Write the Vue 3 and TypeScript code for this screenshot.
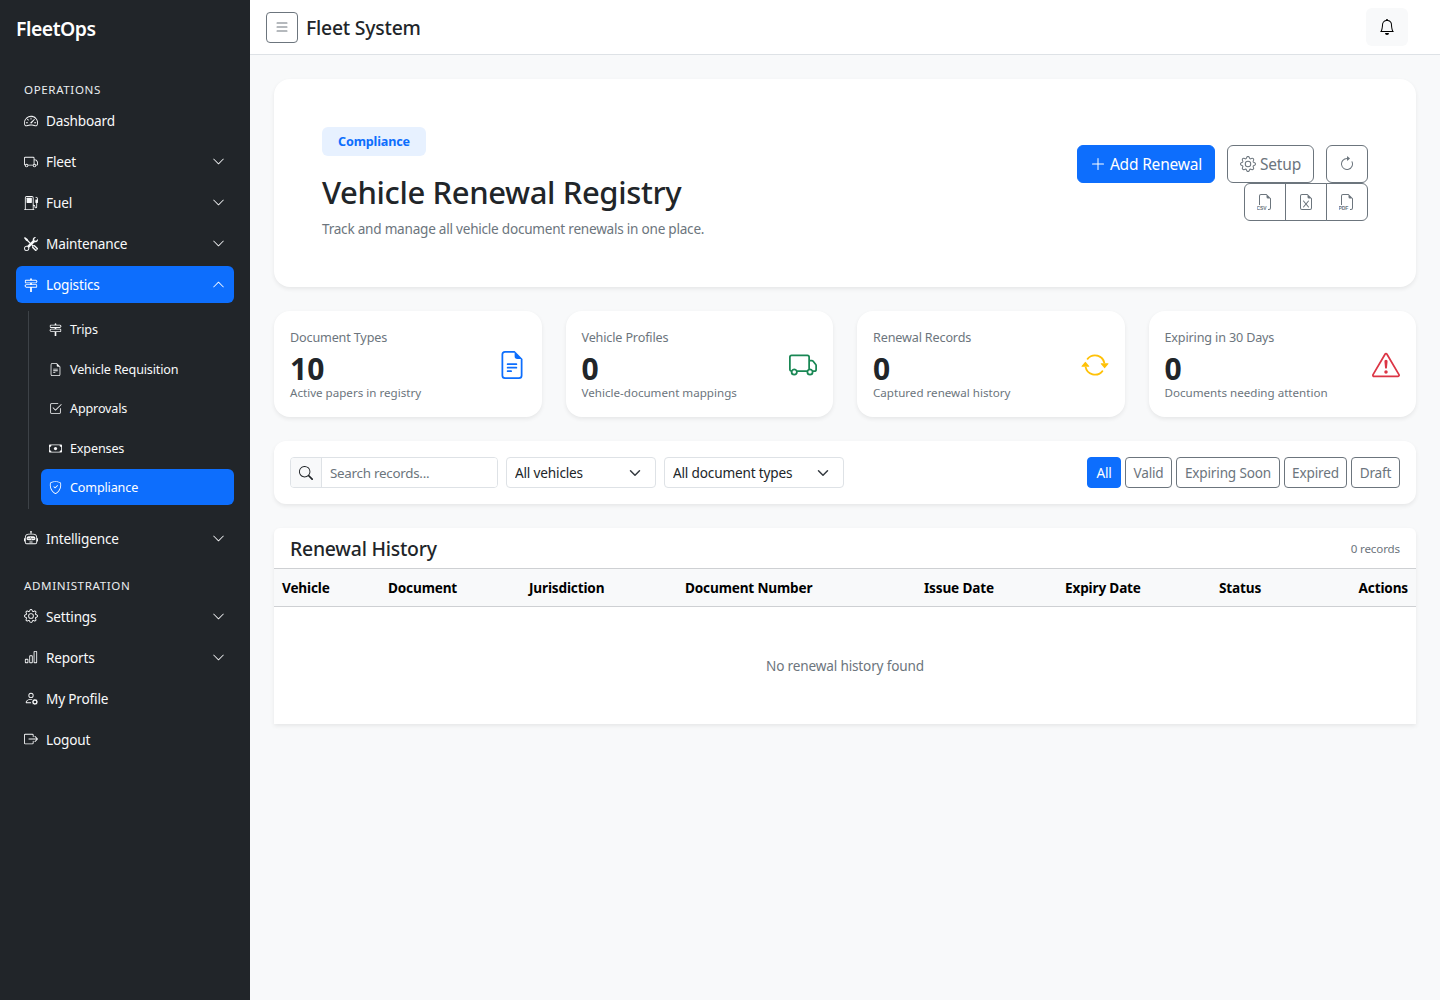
<template>
  <div class="layout">
    <aside class="sidebar">
      <div class="brand">FleetOps</div>
      <template v-for="section in navSections" :key="section.title">
        <div class="section-label">{{ section.title }}</div>
        <nav class="nav-list">
          <template v-for="item in section.items" :key="item.label">
            <a class="nav-item" :class="{ active: item.open }">
              <BiIcon :name="item.icon" :size="14" />
              <span class="nav-text">{{ item.label }}</span>
              <BiIcon v-if="item.children" :name="item.open ? 'chevronUp' : 'chevronDown'" :size="13" class="chevron" />
            </a>
            <div v-if="item.open" class="subnav">
              <a v-for="child in item.children" :key="child.label" class="sub-item" :class="{ active: child.active }">
                <BiIcon :name="child.icon" :size="13" />
                <span>{{ child.label }}</span>
              </a>
            </div>
          </template>
        </nav>
      </template>
    </aside>

    <div class="content">
      <header class="topbar">
        <button class="toggle"><BiIcon name="list" :size="16" /></button>
        <div class="system-name">Fleet System</div>
        <button class="bell"><BiIcon name="bell" :size="16" /></button>
      </header>

      <main class="page">
        <section class="hero">
          <div class="hero-text">
            <span class="badge">Compliance</span>
            <h1>Vehicle Renewal Registry</h1>
            <p>Track and manage all vehicle document renewals in one place.</p>
          </div>
          <div class="hero-actions">
            <button class="btn btn-primary"><BiIcon name="plusLg" :size="16" /> Add Renewal</button>
            <button class="btn btn-outline btn-setup"><BiIcon name="gear" :size="16" /> Setup</button>
            <button class="btn btn-outline btn-icon"><BiIcon name="refresh" :size="16" /></button>
            <div class="export-group">
              <button class="btn btn-outline btn-icon">
                <svg width="16" height="16" viewBox="0 0 16 16" fill="currentColor">
                  <path :d="filePath" />
                  <text x="-0.6" y="16" class="file-label">CSV</text>
                </svg>
              </button>
              <button class="btn btn-outline btn-icon"><BiIcon name="excel" :size="16" /></button>
              <button class="btn btn-outline btn-icon">
                <svg width="16" height="16" viewBox="0 0 16 16" fill="currentColor">
                  <path :d="filePath" />
                  <text x="-0.6" y="16" class="file-label">PDF</text>
                </svg>
              </button>
            </div>
          </div>
        </section>

        <section class="stats">
          <div v-for="stat in stats" :key="stat.label" class="stat-card">
            <div>
              <div class="stat-label">{{ stat.label }}</div>
              <div class="stat-value">{{ stat.value }}</div>
              <div class="stat-note">{{ stat.note }}</div>
            </div>
            <BiIcon :name="stat.icon" :size="28" class="stat-icon" :style="{ color: stat.color }" />
          </div>
        </section>

        <section class="filters">
          <div class="search-group">
            <span class="search-addon"><BiIcon name="search" :size="14" /></span>
            <input type="text" placeholder="Search records..." />
          </div>
          <div class="select-wrap vehicles">
            <select><option>All vehicles</option></select>
            <svg class="select-arrow" viewBox="0 0 16 16"><path d="m2 5 6 6 6-6" /></svg>
          </div>
          <div class="select-wrap types">
            <select><option>All document types</option></select>
            <svg class="select-arrow" viewBox="0 0 16 16"><path d="m2 5 6 6 6-6" /></svg>
          </div>
          <div class="status-buttons">
            <button
              v-for="s in statuses"
              :key="s.label"
              class="status-btn"
              :class="{ active: s.label === activeStatus }"
              :style="{ width: s.width + 'px' }"
              @click="activeStatus = s.label"
            >
              {{ s.label }}
            </button>
          </div>
        </section>

        <section class="history">
          <div class="history-head">
            <h2>Renewal History</h2>
            <span>0 records</span>
          </div>
          <table>
            <thead>
              <tr>
                <th v-for="col in columns" :key="col.label" :style="{ width: col.width + 'px' }" :class="{ right: col.label === 'Actions' }">{{ col.label }}</th>
              </tr>
            </thead>
            <tbody>
              <tr>
                <td :colspan="columns.length" class="empty">No renewal history found</td>
              </tr>
            </tbody>
          </table>
        </section>
      </main>
    </div>
  </div>
</template>

<script setup lang="ts">
import { h, ref } from 'vue'

const icons: Record<string, string[]> = {
  speedometer: [
    'M8 4a.5.5 0 0 1 .5.5V6a.5.5 0 0 1-1 0V4.5A.5.5 0 0 1 8 4M3.732 5.732a.5.5 0 0 1 .707 0l.915.914a.5.5 0 1 1-.708.708l-.914-.915a.5.5 0 0 1 0-.707M2 10a.5.5 0 0 1 .5-.5h1.586a.5.5 0 0 1 0 1H2.5A.5.5 0 0 1 2 10m9.5 0a.5.5 0 0 1 .5-.5h1.5a.5.5 0 0 1 0 1H12a.5.5 0 0 1-.5-.5m.754-4.246a.39.39 0 0 0-.527-.02L7.547 9.31a.91.91 0 1 0 1.302 1.258l3.434-4.297a.39.39 0 0 0-.029-.518z',
    'M0 10a8 8 0 1 1 15.547 2.661c-.442 1.253-1.845 1.602-2.932 1.25C11.309 13.488 9.475 13 8 13c-1.474 0-3.31.488-4.615.911-1.087.352-2.49.003-2.932-1.25A8 8 0 0 1 0 10m8-7a7 7 0 0 0-6.603 9.329c.203.575.923.876 1.68.63C4.397 12.533 6.358 12 8 12s3.604.532 4.923.96c.757.245 1.477-.056 1.68-.631A7 7 0 0 0 8 3'
  ],
  truck: [
    'M0 3.5A1.5 1.5 0 0 1 1.5 2h9A1.5 1.5 0 0 1 12 3.5V5h1.02a1.5 1.5 0 0 1 1.17.563l1.481 1.85a1.5 1.5 0 0 1 .329.938V10.5a1.5 1.5 0 0 1-1.5 1.5H14a2 2 0 1 1-4 0H5a2 2 0 1 1-3.998-.085A1.5 1.5 0 0 1 0 10.5zm1.294 7.456A2 2 0 0 1 4.732 11h5.536a2 2 0 0 1 .732-.732V3.5a.5.5 0 0 0-.5-.5h-9a.5.5 0 0 0-.5.5v7a.5.5 0 0 0 .294.456M12 10a2 2 0 0 1 1.732 1h.768a.5.5 0 0 0 .5-.5V8.35a.5.5 0 0 0-.11-.312l-1.48-1.85A.5.5 0 0 0 13.02 6H12zm-9 1a1 1 0 1 0 0 2 1 1 0 0 0 0-2m9 0a1 1 0 1 0 0 2 1 1 0 0 0 0-2'
  ],
  fuel: [
    'M3 2.5a.5.5 0 0 1 .5-.5h5a.5.5 0 0 1 .5.5v5a.5.5 0 0 1-.5.5h-5a.5.5 0 0 1-.5-.5z',
    'M1 2a2 2 0 0 1 2-2h6a2 2 0 0 1 2 2v8a2 2 0 0 1 2 2v.5a.5.5 0 0 0 1 0V8h-.5a.5.5 0 0 1-.5-.5V4.375a.5.5 0 0 1 .5-.5h1.495c-.011-.476-.053-.894-.201-1.222a.97.97 0 0 0-.394-.458c-.184-.11-.464-.195-.9-.195a.5.5 0 0 1 0-1q.846-.002 1.412.336c.383.228.634.551.794.907.295.655.294 1.465.294 2.081v3.175a.5.5 0 0 1-.5.501H15v4.5a1.5 1.5 0 0 1-3 0V12a1 1 0 0 0-1-1v4h.5a.5.5 0 0 1 0 1H.5a.5.5 0 0 1 0-1H1zm9 0a1 1 0 0 0-1-1H3a1 1 0 0 0-1 1v13h8z'
  ],
  tools: [
    'M1 0 0 1l2.2 3.081a1 1 0 0 0 .815.419h.07a1 1 0 0 1 .708.293l2.675 2.675-2.617 2.654A3.003 3.003 0 0 0 0 13a3 3 0 1 0 5.878-.851l2.654-2.617.968.968-.305.914a1 1 0 0 0 .242 1.023l3.27 3.27a.997.997 0 0 0 1.414 0l1.586-1.586a.997.997 0 0 0 0-1.414l-3.27-3.27a1 1 0 0 0-1.023-.242L10.5 9.5l-.96-.96 2.68-2.643A3.005 3.005 0 0 0 16 3q0-.405-.102-.777l-2.14 2.141L12 4l-.364-1.757L13.777.102a3 3 0 0 0-3.675 3.68L7.462 6.46 4.793 3.793a1 1 0 0 1-.293-.707v-.071a1 1 0 0 0-.419-.814zm9.646 10.646a.5.5 0 0 1 .708 0l2.914 2.915a.5.5 0 0 1-.707.707l-2.915-2.914a.5.5 0 0 1 0-.708M3 11l.471.242.529.026.287.445.445.287.026.529L5 13l-.242.471-.026.529-.445.287-.287.445-.529.026L3 15l-.471-.242L2 14.732l-.287-.445L1.268 14l-.026-.529L1 13l.242-.471.026-.529.445-.287.287-.445.529-.026z'
  ],
  signpost: [
    'M7 1.414V2H2a1 1 0 0 0-1 1v2a1 1 0 0 0 1 1h5v1H2.5a1 1 0 0 0-.8.4L.725 8.7a.5.5 0 0 0 0 .6l.975 1.3a1 1 0 0 0 .8.4H7v5h2v-5h5a1 1 0 0 0 1-1V8a1 1 0 0 0-1-1H9V6h4.5a1 1 0 0 0 .8-.4l.975-1.3a.5.5 0 0 0 0-.6L14.3 2.4a1 1 0 0 0-.8-.4H9v-.586a1 1 0 0 0-2 0M13.5 3l.75 1-.75 1H2V3zm.5 5v2H2.5l-.75-1 .75-1z'
  ],
  fileText: [
    'M5.5 7a.5.5 0 0 0 0 1h5a.5.5 0 0 0 0-1zM5 9.5a.5.5 0 0 1 .5-.5h5a.5.5 0 0 1 0 1h-5a.5.5 0 0 1-.5-.5m0 2a.5.5 0 0 1 .5-.5h2a.5.5 0 0 1 0 1h-2a.5.5 0 0 1-.5-.5',
    'M9.5 0H4a2 2 0 0 0-2 2v12a2 2 0 0 0 2 2h8a2 2 0 0 0 2-2V4.5zm0 1v2A1.5 1.5 0 0 0 11 4.5h2V14a1 1 0 0 1-1 1H4a1 1 0 0 1-1-1V2a1 1 0 0 1 1-1z'
  ],
  checkSquare: [
    'M3 14.5A1.5 1.5 0 0 1 1.5 13V3A1.5 1.5 0 0 1 3 1.5h8a.5.5 0 0 1 0 1H3a.5.5 0 0 0-.5.5v10a.5.5 0 0 0 .5.5h10a.5.5 0 0 0 .5-.5V8a.5.5 0 0 1 1 0v5a1.5 1.5 0 0 1-1.5 1.5z',
    'm8.354 10.354 7-7a.5.5 0 0 0-.708-.708L8 9.293 5.354 6.646a.5.5 0 1 0-.708.708l3 3a.5.5 0 0 0 .708 0'
  ],
  cash: [
    'M8 10a2 2 0 1 0 0-4 2 2 0 0 0 0 4',
    'M0 4a1 1 0 0 1 1-1h14a1 1 0 0 1 1 1v8a1 1 0 0 1-1 1H1a1 1 0 0 1-1-1zm3 0a2 2 0 0 1-2 2v4a2 2 0 0 1 2 2h10a2 2 0 0 1 2-2V6a2 2 0 0 1-2-2z'
  ],
  shield: [
    'M5.338 1.59a61 61 0 0 0-2.837.856.48.48 0 0 0-.328.39c-.554 4.157.726 7.19 2.253 9.188a10.7 10.7 0 0 0 2.287 2.233c.346.244.652.42.893.533q.18.085.293.118a1 1 0 0 0 .101.025 1 1 0 0 0 .1-.025q.114-.034.294-.118c.24-.113.547-.29.893-.533a10.7 10.7 0 0 0 2.287-2.233c1.527-1.997 2.807-5.031 2.253-9.188a.48.48 0 0 0-.328-.39c-.651-.213-1.75-.56-2.837-.855C9.552 1.29 8.531 1.067 8 1.067c-.53 0-1.552.223-2.662.524zM5.072.56C6.157.265 7.31 0 8 0s1.843.265 2.928.56c1.11.3 2.229.655 2.887.87a1.54 1.54 0 0 1 1.044 1.262c.596 4.477-.787 7.795-2.465 9.99a11.8 11.8 0 0 1-2.517 2.453 7 7 0 0 1-1.048.625c-.28.132-.581.24-.829.24s-.548-.108-.829-.24a7 7 0 0 1-1.048-.625 11.8 11.8 0 0 1-2.517-2.453C1.928 10.487.545 7.169 1.141 2.692A1.54 1.54 0 0 1 2.185 1.43 63 63 0 0 1 5.072.56',
    'M10.854 5.146a.5.5 0 0 1 0 .708l-3 3a.5.5 0 0 1-.708 0l-1.5-1.5a.5.5 0 1 1 .708-.708L7.5 7.793l2.646-2.647a.5.5 0 0 1 .708 0'
  ],
  robot: [
    'M6 12.5a.5.5 0 0 1 .5-.5h3a.5.5 0 0 1 0 1h-3a.5.5 0 0 1-.5-.5M3 8.062C3 6.76 4.235 5.765 5.53 5.886a26.6 26.6 0 0 0 4.94 0C11.765 5.765 13 6.76 13 8.062v1.157a.93.93 0 0 1-.765.935c-.845.147-2.34.346-4.235.346s-3.39-.2-4.235-.346A.93.93 0 0 1 3 9.219zm4.542-.827a.25.25 0 0 0-.217.068l-.92.9a25 25 0 0 1-1.871-.183.25.25 0 0 0-.068.495c.55.076 1.232.149 2.02.193a.25.25 0 0 0 .189-.071l.754-.736.847 1.71a.25.25 0 0 0 .404.062l.932-.97a25 25 0 0 0 1.922-.188.25.25 0 0 0-.068-.495c-.538.074-1.207.145-1.98.189a.25.25 0 0 0-.166.076l-.754.785-.842-1.7a.25.25 0 0 0-.182-.135',
    'M8.5 1.866a1 1 0 1 0-1 0V3h-2A4.5 4.5 0 0 0 1 7.5V8a1 1 0 0 0-1 1v2a1 1 0 0 0 1 1v1a2 2 0 0 0 2 2h10a2 2 0 0 0 2-2v-1a1 1 0 0 0 1-1V9a1 1 0 0 0-1-1v-.5A4.5 4.5 0 0 0 10.5 3h-2zM14 7.5V13a1 1 0 0 1-1 1H3a1 1 0 0 1-1-1V7.5A3.5 3.5 0 0 1 5.5 4h5A3.5 3.5 0 0 1 14 7.5'
  ],
  gear: [
    'M8 4.754a3.246 3.246 0 1 0 0 6.492 3.246 3.246 0 0 0 0-6.492M5.754 8a2.246 2.246 0 1 1 4.492 0 2.246 2.246 0 0 1-4.492 0',
    'M9.796 1.343c-.527-1.79-3.065-1.79-3.592 0l-.094.319a.873.873 0 0 1-1.255.52l-.292-.16c-1.64-.892-3.433.902-2.54 2.541l.159.292a.873.873 0 0 1-.52 1.255l-.319.094c-1.79.527-1.79 3.065 0 3.592l.319.094a.873.873 0 0 1 .52 1.255l-.16.292c-.892 1.64.901 3.434 2.541 2.54l.292-.159a.873.873 0 0 1 1.255.52l.094.319c.527 1.79 3.065 1.79 3.592 0l.094-.319a.873.873 0 0 1 1.255-.52l.292.16c1.64.893 3.434-.902 2.54-2.541l-.159-.292a.873.873 0 0 1 .52-1.255l.319-.094c1.79-.527 1.79-3.065 0-3.592l-.319-.094a.873.873 0 0 1-.52-1.255l.16-.292c.893-1.64-.902-3.433-2.541-2.54l-.292.159a.873.873 0 0 1-1.255-.52zm-2.633.283c.246-.835 1.428-.835 1.674 0l.094.319a1.873 1.873 0 0 0 2.693 1.115l.291-.16c.764-.415 1.6.42 1.184 1.185l-.159.292a1.873 1.873 0 0 0 1.116 2.692l.318.094c.835.246.835 1.428 0 1.674l-.319.094a1.873 1.873 0 0 0-1.115 2.693l.16.291c.415.764-.42 1.6-1.185 1.184l-.291-.159a1.873 1.873 0 0 0-2.693 1.116l-.094.318c-.246.835-1.428.835-1.674 0l-.094-.319a1.873 1.873 0 0 0-2.692-1.115l-.292.16c-.764.415-1.6-.42-1.184-1.185l.159-.291A1.873 1.873 0 0 0 1.945 8.93l-.319-.094c-.835-.246-.835-1.428 0-1.674l.319-.094A1.873 1.873 0 0 0 3.06 4.377l-.16-.292c-.415-.764.42-1.6 1.185-1.184l.292.159a1.873 1.873 0 0 0 2.692-1.115z'
  ],
  barChart: [
    'M4 11H2v3h2zm5-4H7v7h2zm5-5v12h-2V2zm-2-1a1 1 0 0 0-1 1v12a1 1 0 0 0 1 1h2a1 1 0 0 0 1-1V2a1 1 0 0 0-1-1zM6 7a1 1 0 0 1 1-1h2a1 1 0 0 1 1 1v7a1 1 0 0 1-1 1H7a1 1 0 0 1-1-1zm-5 4a1 1 0 0 1 1-1h2a1 1 0 0 1 1 1v3a1 1 0 0 1-1 1H2a1 1 0 0 1-1-1z'
  ],
  personGear: [
    'M11 5a3 3 0 1 1-6 0 3 3 0 0 1 6 0M8 7a2 2 0 1 0 0-4 2 2 0 0 0 0 4m.256 7a4.5 4.5 0 0 1-.229-1.004H3c.001-.246.154-.986.832-1.664C4.484 10.68 5.711 10 8 10q.39 0 .74.025c.226-.341.496-.65.804-.918Q8.844 9.002 8 9c-5 0-6 3-6 4s1 1 1 1zm3.63-4.54c.18-.613 1.048-.613 1.229 0l.043.148a.64.64 0 0 0 .921.382l.136-.074c.561-.306 1.175.308.87.869l-.075.136a.64.64 0 0 0 .382.92l.149.045c.612.18.612 1.048 0 1.229l-.15.043a.64.64 0 0 0-.38.921l.074.136c.305.561-.309 1.175-.87.87l-.136-.075a.64.64 0 0 0-.92.382l-.045.149c-.18.612-1.048.612-1.229 0l-.043-.15a.64.64 0 0 0-.921-.38l-.136.074c-.561.305-1.175-.309-.87-.87l.075-.136a.64.64 0 0 0-.382-.92l-.148-.045c-.613-.18-.613-1.048 0-1.229l.148-.043a.64.64 0 0 0 .382-.921l-.074-.136c-.306-.561.308-1.175.869-.87l.136.075a.64.64 0 0 0 .92-.382zM14 12.5a1.5 1.5 0 1 0-3 0 1.5 1.5 0 0 0 3 0'
  ],
  logout: [
    'M10 12.5a.5.5 0 0 1-.5.5h-8a.5.5 0 0 1-.5-.5v-9a.5.5 0 0 1 .5-.5h8a.5.5 0 0 1 .5.5v2a.5.5 0 0 0 1 0v-2A1.5 1.5 0 0 0 9.5 2h-8A1.5 1.5 0 0 0 0 3.5v9A1.5 1.5 0 0 0 1.5 14h8a1.5 1.5 0 0 0 1.5-1.5v-2a.5.5 0 0 0-1 0z',
    'M15.854 8.354a.5.5 0 0 0 0-.708l-3-3a.5.5 0 0 0-.708.708L14.293 7.5H5.5a.5.5 0 0 0 0 1h8.793l-2.147 2.146a.5.5 0 0 0 .708.708z'
  ],
  bell: [
    'M8 16a2 2 0 0 0 2-2H6a2 2 0 0 0 2 2M8 1.918l-.797.161A4 4 0 0 0 4 6c0 .628-.134 2.197-.459 3.742-.16.767-.376 1.566-.663 2.258h10.244c-.287-.692-.502-1.49-.663-2.258C12.134 8.197 12 6.628 12 6a4 4 0 0 0-3.203-3.92zM14.22 12c.223.447.481.801.78 1H1c.299-.199.557-.553.78-1C2.68 10.2 3 6.88 3 6c0-2.42 1.72-4.44 4.005-4.901a1 1 0 1 1 1.99 0A5 5 0 0 1 13 6c0 .88.32 4.2 1.22 6'
  ],
  list: [
    'M2.5 12a.5.5 0 0 1 .5-.5h10a.5.5 0 0 1 0 1H3a.5.5 0 0 1-.5-.5m0-4a.5.5 0 0 1 .5-.5h10a.5.5 0 0 1 0 1H3a.5.5 0 0 1-.5-.5m0-4a.5.5 0 0 1 .5-.5h10a.5.5 0 0 1 0 1H3a.5.5 0 0 1-.5-.5'
  ],
  plusLg: [
    'M8 2a.5.5 0 0 1 .5.5v5h5a.5.5 0 0 1 0 1h-5v5a.5.5 0 0 1-1 0v-5h-5a.5.5 0 0 1 0-1h5v-5A.5.5 0 0 1 8 2'
  ],
  refresh: [
    'M8 3a5 5 0 1 0 4.546 2.914.5.5 0 0 1 .908-.417A6 6 0 1 1 8 2z',
    'M8 4.466V.534a.25.25 0 0 1 .41-.192l2.36 1.966c.12.1.12.284 0 .384L8.41 4.658A.25.25 0 0 1 8 4.466'
  ],
  excel: [
    'M5.884 6.68a.5.5 0 1 0-.768.64L7.349 10l-2.233 2.68a.5.5 0 0 0 .768.64L8 10.781l2.116 2.54a.5.5 0 0 0 .768-.641L8.651 10l2.233-2.68a.5.5 0 0 0-.768-.64L8 9.219l-2.116-2.54z',
    'M14 14V4.5L9.5 0H4a2 2 0 0 0-2 2v12a2 2 0 0 0 2 2h8a2 2 0 0 0 2-2M9.5 3A1.5 1.5 0 0 0 11 4.5h2V14a1 1 0 0 1-1 1H4a1 1 0 0 1-1-1V2a1 1 0 0 1 1-1h5.5z'
  ],
  warning: [
    'M7.938 2.016A.13.13 0 0 1 8.002 2a.13.13 0 0 1 .063.016.15.15 0 0 1 .054.057l6.857 11.667c.036.06.035.124.002.183a.2.2 0 0 1-.054.06.1.1 0 0 1-.066.017H1.146a.1.1 0 0 1-.066-.017.2.2 0 0 1-.054-.06.18.18 0 0 1 .002-.183L7.884 2.073a.15.15 0 0 1 .054-.057m1.044-.45a1.13 1.13 0 0 0-1.96 0L.165 13.233c-.457.778.091 1.767.98 1.767h13.713c.889 0 1.438-.99.98-1.767z',
    'M7.002 12a1 1 0 1 1 2 0 1 1 0 0 1-2 0M7.1 5.995a.905.905 0 1 1 1.8 0l-.35 3.507a.552.552 0 0 1-1.1 0z'
  ],
  repeat: [
    'M11.534 7h3.932a.25.25 0 0 1 .192.41l-1.966 2.36a.25.25 0 0 1-.384 0l-1.966-2.36a.25.25 0 0 1 .192-.41m-11 2h3.932a.25.25 0 0 0 .192-.41L2.692 6.23a.25.25 0 0 0-.384 0L.342 8.59A.25.25 0 0 0 .534 9',
    'M8 3c-1.552 0-2.94.707-3.857 1.818a.5.5 0 1 1-.771-.636A6.002 6.002 0 0 1 13.917 7H12.9A5 5 0 0 0 8 3M3.1 9a5.002 5.002 0 0 0 8.757 2.182.5.5 0 1 1 .771.636A6.002 6.002 0 0 1 2.083 9z'
  ],
  search: [
    'M11.742 10.344a6.5 6.5 0 1 0-1.397 1.398h-.001q.044.06.098.115l3.85 3.85a1 1 0 0 0 1.415-1.414l-3.85-3.85a1 1 0 0 0-.115-.1zM12 6.5a5.5 5.5 0 1 1-11 0 5.5 5.5 0 0 1 11 0'
  ],
  chevronDown: [
    'M1.646 4.646a.5.5 0 0 1 .708 0L8 10.293l5.646-5.647a.5.5 0 0 1 .708.708l-6 6a.5.5 0 0 1-.708 0l-6-6a.5.5 0 0 1 0-.708'
  ],
  chevronUp: [
    'M7.646 4.646a.5.5 0 0 1 .708 0l6 6a.5.5 0 0 1-.708.708L8 5.707l-5.646 5.647a.5.5 0 0 1-.708-.708z'
  ]
}

const BiIcon = (props: { name: string; size: number }) =>
  h(
    'svg',
    { width: props.size, height: props.size, viewBox: '0 0 16 16', fill: 'currentColor', style: 'flex-shrink:0' },
    icons[props.name].map((d) => h('path', { d }))
  )
BiIcon.props = ['name', 'size']

const filePath =
  'M14 4.5V14a2 2 0 0 1-2 2h-1v-1h1a1 1 0 0 0 1-1V4.5h-2A1.5 1.5 0 0 1 9.5 3V1H4a1 1 0 0 0-1 1v9H2V2a2 2 0 0 1 2-2h5.5z'

interface NavChild {
  label: string
  icon: string
  active?: boolean
}

interface NavItem {
  label: string
  icon: string
  open?: boolean
  children?: NavChild[]
}

const navSections: { title: string; items: NavItem[] }[] = [
  {
    title: 'Operations',
    items: [
      { label: 'Dashboard', icon: 'speedometer' },
      { label: 'Fleet', icon: 'truck', children: [] },
      { label: 'Fuel', icon: 'fuel', children: [] },
      { label: 'Maintenance', icon: 'tools', children: [] },
      {
        label: 'Logistics',
        icon: 'signpost',
        open: true,
        children: [
          { label: 'Trips', icon: 'signpost' },
          { label: 'Vehicle Requisition', icon: 'fileText' },
          { label: 'Approvals', icon: 'checkSquare' },
          { label: 'Expenses', icon: 'cash' },
          { label: 'Compliance', icon: 'shield', active: true }
        ]
      },
      { label: 'Intelligence', icon: 'robot', children: [] }
    ]
  },
  {
    title: 'Administration',
    items: [
      { label: 'Settings', icon: 'gear', children: [] },
      { label: 'Reports', icon: 'barChart', children: [] },
      { label: 'My Profile', icon: 'personGear' },
      { label: 'Logout', icon: 'logout' }
    ]
  }
]

const stats = [
  { label: 'Document Types', value: 10, note: 'Active papers in registry', icon: 'fileText', color: '#0d6efd' },
  { label: 'Vehicle Profiles', value: 0, note: 'Vehicle-document mappings', icon: 'truck', color: '#198754' },
  { label: 'Renewal Records', value: 0, note: 'Captured renewal history', icon: 'repeat', color: '#ffc107' },
  { label: 'Expiring in 30 Days', value: 0, note: 'Documents needing attention', icon: 'warning', color: '#dc3545' }
]

const statuses = [
  { label: 'All', width: 34 },
  { label: 'Valid', width: 47 },
  { label: 'Expiring Soon', width: 104 },
  { label: 'Expired', width: 63 },
  { label: 'Draft', width: 49 }
]
const activeStatus = ref('All')

const columns = [
  { label: 'Vehicle', width: 106 },
  { label: 'Document', width: 141 },
  { label: 'Jurisdiction', width: 156 },
  { label: 'Document Number', width: 239 },
  { label: 'Issue Date', width: 141 },
  { label: 'Expiry Date', width: 154 },
  { label: 'Status', width: 105 },
  { label: 'Actions', width: 100 }
]
</script>

<style>
body {
  background: #f8f9fa;
}
</style>

<style scoped>
.layout {
  display: flex;
  min-height: 100vh;
  font-family: "Noto Sans", "Liberation Sans", sans-serif;
  font-size: 13.6px;
  color: #212529;
}

.layout * {
  letter-spacing: -0.012em;
}

.sidebar {
  width: 250px;
  flex-shrink: 0;
  background: #212529;
  color: #fff;
  padding: 14px 16px 0;
  box-sizing: border-box;
}

.layout .brand {
  font-size: 19.4px;
  line-height: 30px;
  font-weight: 600;
  letter-spacing: -0.025em;
  margin-bottom: 37px;
}

.layout .section-label {
  padding-left: 8px;
  font-size: 11.6px;
  line-height: 18px;
  letter-spacing: 0.6px;
  text-transform: uppercase;
  color: #e9ecef;
  margin-bottom: 3px;
}

.nav-list {
  display: flex;
  flex-direction: column;
  gap: 4px;
  margin-bottom: 20px;
}

.nav-item {
  display: flex;
  align-items: center;
  gap: 8px;
  padding: 8px;
  line-height: 21px;
  border-radius: 6px;
  color: #f8f9fa;
}

.nav-item.active {
  background: #0d6efd;
  color: #fff;
}

.nav-text {
  flex: 1;
}

.chevron {
  margin-right: 1px;
}

.subnav {
  display: flex;
  flex-direction: column;
  gap: 4px;
  margin: 4px 0 7px 12px;
  padding: 0 0 4px 12px;
  border-left: 1px solid #3d4247;
}

.sub-item {
  display: flex;
  align-items: center;
  gap: 8px;
  padding: 9px 8px 7px;
  font-size: 12.6px;
  line-height: 19.5px;
  border-radius: 6px;
  color: #f8f9fa;
}

.sub-item.active {
  background: #0d6efd;
  color: #fff;
}

.content {
  flex: 1;
  min-width: 0;
}

.topbar {
  display: flex;
  align-items: center;
  height: 55px;
  box-sizing: border-box;
  padding: 0 32px 0 16px;
  background: #fff;
  border-bottom: 1px solid #dee2e6;
}

.toggle {
  width: 32px;
  height: 31px;
  padding: 0;
  display: flex;
  align-items: center;
  justify-content: center;
  background: #fff;
  border: 1px solid #6c757d;
  border-radius: 4px;
  color: #6c757d;
}

.system-name {
  flex: 1;
  margin-left: 8px;
  padding-top: 2px;
  font-size: 19.4px;
  font-weight: 500;
  line-height: 30px;
}

.bell {
  width: 42px;
  height: 38px;
  display: flex;
  align-items: center;
  justify-content: center;
  padding: 0;
  border: none;
  border-radius: 6px;
  background: #f8f9fa;
  color: #000;
}

.page {
  display: flex;
  flex-direction: column;
  gap: 24px;
  padding: 24px;
}

.hero {
  display: flex;
  justify-content: space-between;
  align-items: center;
  padding: 48px;
  background: #fff;
  border-radius: 16px;
  box-shadow: 0 2px 4px rgba(0, 0, 0, 0.075);
}

.badge {
  display: inline-block;
  padding: 1px 16px 0;
  line-height: 28px;
  font-size: 12.6px;
  font-weight: 700;
  color: #0d6efd;
  background: #e7f1ff;
  border-radius: 6px;
}

.hero h1 {
  margin: 17px 0 7px;
  font-size: 31px;
  line-height: 38px;
  font-weight: 500;
}

.layout .hero p {
  margin: 0;
  line-height: 21px;
  letter-spacing: -0.018em;
  color: #6c757d;
}

.hero-actions {
  display: flex;
  flex-wrap: wrap;
  justify-content: flex-end;
  column-gap: 12px;
  width: 320px;
}

.btn {
  display: inline-flex;
  align-items: center;
  justify-content: center;
  gap: 4px;
  height: 38px;
  padding: 0;
  font-family: inherit;
  font-size: 15.5px;
  white-space: nowrap;
  border-radius: 6px;
  box-sizing: border-box;
}

.btn-primary {
  width: 138px;
  background: #0d6efd;
  border: 1px solid #0d6efd;
  color: #fff;
}

.btn-outline {
  background: #fff;
  border: 1px solid #6c757d;
  color: #6c757d;
}

.btn-setup {
  width: 87px;
}

.btn-icon {
  width: 42px;
}

.export-group {
  display: flex;
  justify-content: flex-end;
}

.export-group .btn {
  border-radius: 0;
  margin-left: -1px;
}

.export-group .btn:first-child {
  border-radius: 6px 0 0 6px;
}

.export-group .btn:last-child {
  border-radius: 0 6px 6px 0;
}

.file-label {
  font-family: "Liberation Sans", sans-serif;
  font-size: 5px;
  font-weight: 700;
}

.stats {
  display: grid;
  grid-template-columns: repeat(4, 1fr);
  gap: 24px;
}

.stat-card {
  display: flex;
  justify-content: space-between;
  align-items: center;
  padding: 16px;
  background: #fff;
  border-radius: 16px;
  box-shadow: 0 2px 4px rgba(0, 0, 0, 0.075);
}

.stat-label {
  margin-top: 1px;
  font-size: 12.6px;
  line-height: 19px;
  color: #6c757d;
}

.layout .stat-value {
  margin-top: 7px;
  font-size: 30px;
  line-height: 30px;
  font-weight: 700;
  letter-spacing: 0;
}

.layout .stat-note {
  font-size: 11.6px;
  line-height: 17px;
  letter-spacing: 0;
  color: #6c757d;
}

.stat-icon {
  margin-top: 2px;
}

.filters {
  display: flex;
  align-items: center;
  gap: 8px;
  padding: 16px;
  background: #fff;
  border-radius: 12px;
  box-shadow: 0 2px 4px rgba(0, 0, 0, 0.075);
}

.search-group {
  display: flex;
  width: 208px;
  height: 31px;
  box-sizing: border-box;
  border: 1px solid #dee2e6;
  border-radius: 4px;
  overflow: hidden;
}

.search-addon {
  display: flex;
  align-items: center;
  justify-content: center;
  width: 30px;
  flex-shrink: 0;
  background: #f8f9fa;
  border-right: 1px solid #dee2e6;
  color: #212529;
}

.search-group input {
  flex: 1;
  min-width: 0;
  border: none;
  outline: none;
  padding: 0 8px;
  font-family: inherit;
  font-size: 13.4px;
  letter-spacing: -0.02em;
}

.search-group input::placeholder {
  color: #6c757d;
}

.select-wrap {
  position: relative;
  height: 31px;
}

.select-wrap.vehicles {
  width: 150px;
}

.select-wrap.types {
  width: 180px;
}

.select-wrap select {
  width: 100%;
  height: 100%;
  padding: 0 32px 0 8px;
  appearance: none;
  background: #fff;
  border: 1px solid #dee2e6;
  border-radius: 4px;
  font-family: inherit;
  font-size: 13.6px;
  color: #212529;
}

.select-arrow {
  position: absolute;
  top: 10px;
  right: 15px;
  width: 12px;
  height: 12px;
  fill: none;
  stroke: #343a40;
  stroke-width: 2;
  stroke-linecap: round;
  stroke-linejoin: round;
  pointer-events: none;
}

.status-buttons {
  display: flex;
  gap: 4px;
  margin-left: auto;
}

.status-btn {
  height: 31px;
  padding: 0;
  font-family: inherit;
  font-size: 13.6px;
  background: #fff;
  border: 1px solid #6c757d;
  border-radius: 4px;
  color: #6c757d;
}

.status-btn.active {
  background: #0d6efd;
  border-color: #0d6efd;
  color: #fff;
}

.history {
  background: #fff;
  border-radius: 6px 6px 0 0;
  box-shadow: 0 2px 4px rgba(0, 0, 0, 0.075);
  overflow: hidden;
}

.history-head {
  display: flex;
  justify-content: space-between;
  align-items: center;
  height: 40px;
  padding: 0 16px;
}

.history-head h2 {
  margin: 0;
  font-size: 19.4px;
  font-weight: 500;
}

.history-head span {
  font-size: 11.6px;
  color: #6c757d;
}

table {
  width: 100%;
  table-layout: fixed;
  border-collapse: collapse;
}

th {
  box-sizing: border-box;
  padding: 8px;
  text-align: left;
  font-size: 13.6px;
  line-height: 21px;
  font-weight: 700;
  color: #000;
  background: #f8f9fa;
  border-top: 1px solid #ced0d3;
  border-bottom: 1px solid #ced0d3;
}

th.right {
  text-align: right;
}

.empty {
  padding: 48px 8px;
  text-align: center;
  line-height: 21px;
  color: #6c757d;
}
</style>
